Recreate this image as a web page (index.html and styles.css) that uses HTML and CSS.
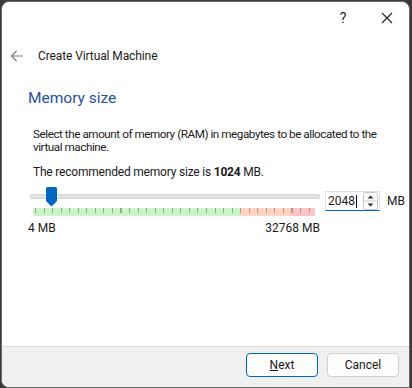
FILE: index.html
```html
<!DOCTYPE html>
<html lang="en">

<head>
  <meta charset="UTF-8" />
  <meta name="viewport" content="width=device-width, initial-scale=1.0" />
  <title>Create Virtual Machine</title>
  <link rel="stylesheet" href="styles.css">
</head>

<body>
  <div class="window">
    <div class="titlebar">
      <span class="tb-btn help">?</span>
      <span class="tb-btn close">
        <svg width="12" height="12" viewBox="0 0 12 12">
          <path d="M1 1 L11 11 M11 1 L1 11" stroke="#222" stroke-width="1.1" fill="none" />
        </svg>
      </span>
    </div>

    <div class="header">
      <svg class="back" width="14" height="12" viewBox="0 0 14 12">
        <path d="M13 6 H1.5 M6.5 1 L1.5 6 L6.5 11" stroke="#7a7a7a" stroke-width="1.2" fill="none" />
      </svg>
      <span class="title">Create Virtual Machine</span>
    </div>

    <div class="content">
      <h2>Memory size</h2>
      <p>Select the amount of memory (RAM) in megabytes to be allocated to the virtual machine.</p>
      <p class="recommend">The recommended memory size is <b>1024</b> MB.</p>

      <div class="mem-row">
        <div class="slider">
          <div class="groove"></div>
          <div class="ticks">
            <div class="zone green"></div>
            <div class="zone orange"></div>
            <div class="zone red"></div>
          </div>
          <svg class="handle" width="11" height="20" viewBox="0 0 11 20">
            <path d="M1.5 0 H9.5 A1.5 1.5 0 0 1 11 1.5 V14 L5.5 19.5 L0 14 V1.5 A1.5 1.5 0 0 1 1.5 0 Z" fill="#0067c0" />
          </svg>
          <div class="scale">
            <span>4 MB</span>
            <span>32768 MB</span>
          </div>
        </div>
        <div class="spinbox">
          <span class="value">2048<span class="caret"></span></span>
          <span class="arrows">
            <svg width="15" height="18" viewBox="0 0 15 18">
              <rect x="0.5" y="0.5" width="14" height="17" rx="2" fill="#fdfdfd" stroke="#c8c8c8" />
              <line x1="1" y1="9" x2="14" y2="9" stroke="#c8c8c8" />
              <path d="M4.5 6.5 L7.5 3.5 L10.5 6.5 Z" fill="#333" />
              <path d="M4.5 11.5 L7.5 14.5 L10.5 11.5 Z" fill="#333" />
            </svg>
          </span>
        </div>
        <span class="unit">MB</span>
      </div>
    </div>

    <div class="footer">
      <button class="btn primary"><u>N</u>ext</button>
      <button class="btn">Cancel</button>
    </div>
  </div>
</body>

</html>
```

FILE: styles.css
```css
body {
  margin: 0;
  padding: 0;
  background-color: #3a3a3a;
  font-family: Roboto, "Noto Sans", sans-serif;
  font-size: 12px;
  color: #1b1b1b;
  overflow: hidden;
}

.window {
  margin: 1px 2px 0 1px;
  height: 385px;
  background-color: #ffffff;
  border: 1px solid #6b6b6b;
  border-radius: 8px 8px 0 8px;
  display: flex;
  flex-direction: column;
  overflow: hidden;
}

/* title bar */
.titlebar {
  height: 31px;
  display: flex;
  justify-content: flex-end;
}

.tb-btn {
  width: 44px;
  display: flex;
  align-items: center;
  justify-content: center;
}

.help {
  font-size: 14px;
  color: #222;
}

/* header with back arrow */
.header {
  height: 46px;
  display: flex;
  align-items: center;
  padding-left: 8px;
}

.header .back {
  margin-right: 14px;
}

.header .title {
  font-size: 12px;
  color: #1b1b1b;
  letter-spacing: -0.1px;
}

/* main content */
.content {
  flex: 1;
  padding: 0 0 0 31px;
}

.content h2 {
  margin: 8px 0 0 -5px;
  font-size: 15.5px;
  font-weight: normal;
  color: #2a4fa3;
  line-height: 22px;
}

.content p {
  margin: 19px 0 0 0;
  width: 372px;
  font-size: 11.7px;
  line-height: 13px;
  letter-spacing: -0.45px;
}

.content p.recommend {
  margin-top: 12px;
  font-size: 12px;
  letter-spacing: -0.2px;
}

.mem-row {
  display: flex;
  align-items: flex-start;
  margin-top: 8px;
  margin-left: -5px;
}

.slider {
  position: relative;
  width: 292px;
}

.groove {
  margin: 7px 0 0 2px;
  height: 3px;
  background-color: #e3e3e3;
  border: 1px solid #d6d6d6;
  border-radius: 2px;
}

.ticks {
  display: flex;
  margin: 9px 5px 0 5px;
  height: 8px;
  position: relative;
}

.ticks::after {
  content: "";
  position: absolute;
  left: 2px;
  right: 0;
  top: 0;
  height: 5px;
  background: repeating-linear-gradient(90deg, #a0a0a0 0, #a0a0a0 1px, transparent 1px, transparent 8.55px);
}

.zone {
  height: 8px;
}

.zone.green {
  width: 207px;
  background-color: #c8f7c5;
}

.zone.orange {
  width: 50px;
  background-color: #ffd4bf;
}

.zone.red {
  flex: 1;
  background-color: #ffc4c6;
}

.handle {
  position: absolute;
  left: 18px;
  top: 0;
}

.scale {
  display: flex;
  justify-content: space-between;
  margin-top: 5px;
  line-height: 14px;
}

.spinbox {
  margin: 4px 0 0 5px;
  width: 55px;
  height: 20px;
  box-sizing: border-box;
  border: 1px solid #e0e0e0;
  border-bottom: 1px solid #0067c0;
  display: flex;
  align-items: center;
  justify-content: space-between;
  padding: 0 1px 0 2px;
}

.spinbox .value {
  display: flex;
  align-items: center;
}

.caret {
  display: inline-block;
  width: 1px;
  height: 13px;
  background-color: #111;
  margin-left: 1px;
}

.spinbox .arrows svg {
  display: block;
}

.unit {
  margin: 7px 0 0 7px;
}

/* bottom buttons */
.footer {
  height: 41px;
  background-color: #f0f0f0;
  border-top: 1px solid #dcdcdc;
  display: flex;
  justify-content: flex-end;
  align-items: flex-start;
  padding: 6px 10px 0 0;
  gap: 9px;
  box-sizing: border-box;
}

.btn {
  width: 72px;
  height: 24px;
  font-family: Roboto, "Noto Sans", sans-serif;
  font-size: 12px;
  color: #1b1b1b;
  background-color: #fdfdfd;
  border: 1px solid #d0d0d0;
  border-radius: 4px;
  padding: 0;
}

.btn.primary {
  border: 1px solid #0067c0;
}
```
